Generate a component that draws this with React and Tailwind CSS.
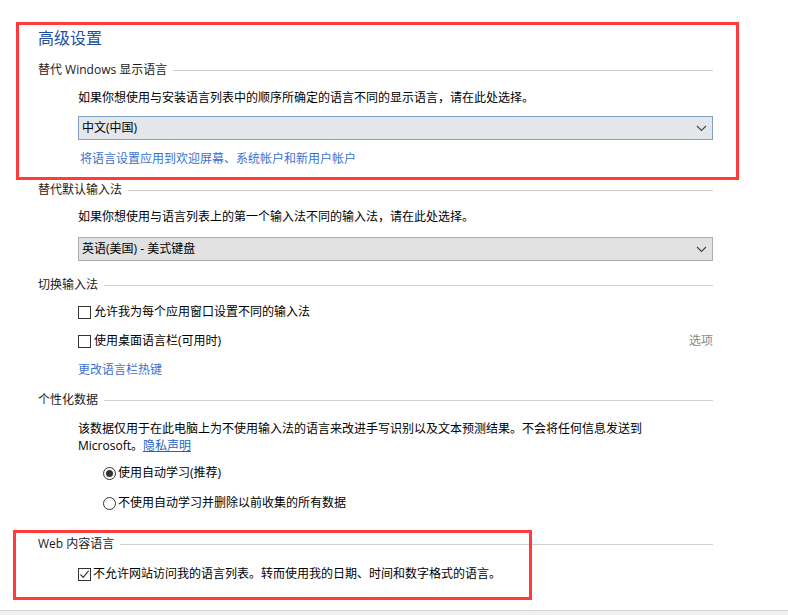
import React from 'react'

const font = { fontFamily: '"Open Sans", "Noto Sans CJK SC", sans-serif' }

function Header({ children, className = '' }) {
  return (
    <div className={`flex items-center h-[16px] ${className}`}>
      <span className="text-[12px] leading-[16px] text-[#1a1a1a] whitespace-nowrap">{children}</span>
      <div className="flex-1 h-px bg-[#cfcfcf] ml-[6px] mt-[1px]" />
    </div>
  )
}

function Chevron() {
  return (
    <svg width="11" height="7" viewBox="0 0 11 7" fill="none">
      <path d="M1 1 L5.5 5.5 L10 1" stroke="#444" strokeWidth="1.1" />
    </svg>
  )
}

function Select({ value, variant }) {
  const cls = variant === 'blue'
    ? 'bg-[#e3e6ea] border-[#7ea1c4]'
    : 'bg-[#e1e1e1] border-[#adadad]'
  return (
    <div className={`ml-[40px] h-[24px] border flex items-center justify-between pl-[3px] pr-[5px] ${cls}`}>
      <span className="text-[12px] leading-[16px] text-black">{value}</span>
      <Chevron />
    </div>
  )
}

function Checkbox({ checked }) {
  return (
    <span className="w-[13px] h-[13px] border border-[#333] bg-white flex items-center justify-center shrink-0">
      {checked && (
        <svg width="11" height="11" viewBox="0 0 11 11" fill="none">
          <path d="M1.5 5.5 L4.2 8.3 L9.6 1.8" stroke="#333" strokeWidth="1.2" />
        </svg>
      )}
    </span>
  )
}

function Radio({ checked }) {
  return (
    <span className="w-[13px] h-[13px] rounded-full border border-[#333] bg-white flex items-center justify-center shrink-0">
      {checked && <span className="w-[7px] h-[7px] rounded-full bg-[#333]" />}
    </span>
  )
}

export default function App() {
  return (
    <div className="relative w-[788px] h-[615px] bg-white overflow-hidden flex flex-col" style={font}>
      <div className="pl-[38px] pr-[75px] pt-[28px] flex flex-col">
        {/* 高级设置 */}
        <div className="h-[20px] text-[16px] leading-[20px] text-[#1e4f9f]">高级设置</div>

        <Header className="mt-[14px]">替代 Windows 显示语言</Header>
        <div className="mt-[12px] ml-[40px] h-[16px] text-[12px] leading-[16px] text-black">
          如果你想使用与安装语言列表中的顺序所确定的语言不同的显示语言，请在此处选择。
        </div>
        <div className="mt-[10px]">
          <Select value="中文(中国)" variant="blue" />
        </div>
        <div className="mt-[11px] ml-[42px] h-[16px] text-[12px] leading-[16px] text-[#3a72cf]">
          将语言设置应用到欢迎屏幕、系统帐户和新用户帐户
        </div>

        <Header className="mt-[15px]">替代默认输入法</Header>
        <div className="mt-[11px] ml-[40px] h-[16px] text-[12px] leading-[16px] text-black">
          如果你想使用与语言列表上的第一个输入法不同的输入法，请在此处选择。
        </div>
        <div className="mt-[12px]">
          <Select value="英语(美国) - 美式键盘" variant="gray" />
        </div>

        <Header className="mt-[16px]">切换输入法</Header>
        <div className="mt-[11px] ml-[40px] h-[16px] flex items-center gap-[3px]">
          <Checkbox />
          <span className="text-[12px] leading-[16px] text-black">允许我为每个应用窗口设置不同的输入法</span>
        </div>
        <div className="mt-[13px] ml-[40px] h-[16px] flex items-center gap-[3px]">
          <Checkbox />
          <span className="text-[12px] leading-[16px] text-black">使用桌面语言栏(可用时)</span>
          <span className="ml-auto text-[12px] leading-[16px] text-[#8a8a8a]">选项</span>
        </div>
        <div className="mt-[13px] ml-[40px] h-[16px] text-[12px] leading-[16px] text-[#3a72cf]">
          更改语言栏热键
        </div>

        <Header className="mt-[14px]">个性化数据</Header>
        <div className="mt-[12px] ml-[40px] w-[570px] text-[12px] leading-[17px] text-black">
          该数据仅用于在此电脑上为不使用输入法的语言来改进手写识别以及文本预测结果。不会将任何信息发送到
          <br />
          Microsoft。<span className="text-[#1a66c7] underline">隐私声明</span>
        </div>
        <div className="mt-[11px] ml-[65px] h-[16px] flex items-center gap-[2px]">
          <Radio checked />
          <span className="text-[12px] leading-[16px] text-black">使用自动学习(推荐)</span>
        </div>
        <div className="mt-[14px] ml-[65px] h-[16px] flex items-center gap-[2px]">
          <Radio />
          <span className="text-[12px] leading-[16px] text-black">不使用自动学习并删除以前收集的所有数据</span>
        </div>

        <Header className="mt-[25px]">Web 内容语言</Header>
        <div className="mt-[14px] ml-[40px] h-[16px] flex items-center gap-[2px]">
          <Checkbox checked />
          <span className="text-[12px] leading-[16px] text-black">不允许网站访问我的语言列表。转而使用我的日期、时间和数字格式的语言。</span>
        </div>
      </div>

      <div className="mt-auto h-[5px] border-t border-[#d4d4d4] bg-[#f0f0f0]" />

      {/* annotation frames */}
      <div className="absolute left-[16px] top-[22px] w-[723px] h-[158px] border-[3px] border-[#ff3b3b] pointer-events-none" />
      <div className="absolute left-[13px] top-[530px] w-[519px] h-[70px] border-[3px] border-[#ff3b3b] pointer-events-none" />
    </div>
  )
}
